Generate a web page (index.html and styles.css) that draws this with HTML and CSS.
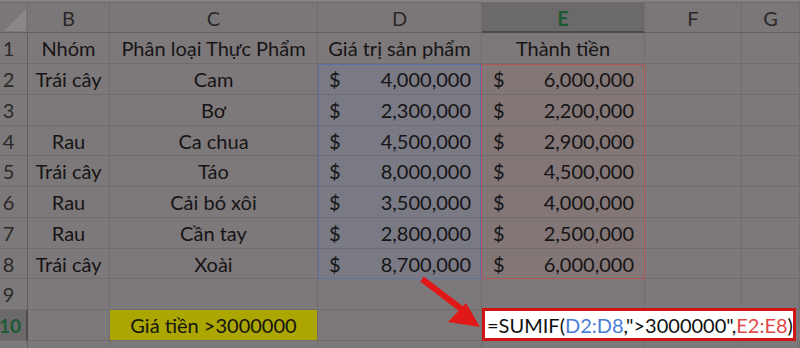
FILE: index.html
```html
<!DOCTYPE html>
<html>
<head>
<meta charset="utf-8">
<link rel="stylesheet" href="styles.css">
</head>
<body>
<div class="sheet">
  <div class="topstrip"></div>
  <div class="grid">
    <div class="hd corner"><span class="tri"></span></div>
    <div class="hd col">B</div>
    <div class="hd col">C</div>
    <div class="hd col">D</div>
    <div class="hd col sel">E</div>
    <div class="hd col">F</div>
    <div class="hd col">G</div>

    <div class="rh">1</div><div class="c ctr">Nhóm</div><div class="c ctr">Phân loại Thực Phẩm</div><div class="c ctr">Giá trị sản phẩm</div><div class="c ctr">Thành tiền</div><div class="c"></div><div class="c"></div>

    <div class="rh">2</div><div class="c ctr">Trái cây</div><div class="c ctr">Cam</div><div class="c money blue first"><span>$</span><span>4,000,000</span></div><div class="c money red first"><span>$</span><span>6,000,000</span></div><div class="c"></div><div class="c"></div>
    <div class="rh">3</div><div class="c ctr"></div><div class="c ctr">Bơ</div><div class="c money blue"><span>$</span><span>2,300,000</span></div><div class="c money red"><span>$</span><span>2,200,000</span></div><div class="c"></div><div class="c"></div>
    <div class="rh">4</div><div class="c ctr">Rau</div><div class="c ctr">Ca chua</div><div class="c money blue"><span>$</span><span>4,500,000</span></div><div class="c money red"><span>$</span><span>2,900,000</span></div><div class="c"></div><div class="c"></div>
    <div class="rh">5</div><div class="c ctr">Trái cây</div><div class="c ctr">Táo</div><div class="c money blue"><span>$</span><span>8,000,000</span></div><div class="c money red"><span>$</span><span>4,500,000</span></div><div class="c"></div><div class="c"></div>
    <div class="rh">6</div><div class="c ctr">Rau</div><div class="c ctr">Cải bó xôi</div><div class="c money blue"><span>$</span><span>3,500,000</span></div><div class="c money red"><span>$</span><span>4,000,000</span></div><div class="c"></div><div class="c"></div>
    <div class="rh">7</div><div class="c ctr">Rau</div><div class="c ctr">Cần tay</div><div class="c money blue"><span>$</span><span>2,800,000</span></div><div class="c money red"><span>$</span><span>2,500,000</span></div><div class="c"></div><div class="c"></div>
    <div class="rh">8</div><div class="c ctr">Trái cây</div><div class="c ctr">Xoài</div><div class="c money blue last"><span>$</span><span>8,700,000</span></div><div class="c money red last"><span>$</span><span>6,000,000</span></div><div class="c"></div><div class="c"></div>
    <div class="rh">9</div><div class="c"></div><div class="c"></div><div class="c"></div><div class="c"></div><div class="c"></div><div class="c"></div>
    <div class="rh selrow">10</div><div class="c"></div><div class="c ctr yellow">Giá tiền &gt;3000000</div><div class="c"></div>
    <div class="formula">=SUMIF(<span class="fb">D2:D8</span>,"&gt;3000000",<span class="fr">E2:E8</span>)</div>
    <div class="rh"></div><div class="c"></div><div class="c"></div><div class="c"></div><div class="c"></div><div class="c"></div><div class="c"></div>
  </div>
  <svg class="arrow" width="80" height="70" viewBox="0 0 80 70">
    <line x1="4" y1="4" x2="46" y2="36" stroke="#e01818" stroke-width="6" stroke-linecap="butt"/>
    <polygon points="62,52 30,47 48,28" fill="#e01818"/>
  </svg>
</div>
</body>
</html>
```
FILE: styles.css
```css
* { box-sizing: border-box; }
html, body { margin: 0; padding: 0; }
body {
  width: 800px;
  height: 348px;
  overflow: hidden;
  background: #7d797a;
  font-family: Lato, "Open Sans", sans-serif;
  color: #161415;
}
.sheet { position: relative; width: 800px; height: 348px; overflow: hidden; }
.topstrip { height: 3px; background: #858182; border-bottom: 1px solid #6e6a6b; }
.grid {
  display: grid;
  grid-template-columns: 28px 82px 208px 164px 163px 97px 58px;
  grid-template-rows: 30px 31px 31px 31px 30px 31px 31px 31px 30px 31px 31px 31px;
  width: 800px;
}
.hd {
  background: #7b7778;
  border-bottom: 1px solid #625e5f;
  border-right: 1px solid #716d6e;
  display: flex;
  align-items: center;
  justify-content: center;
  font-size: 20px;
  color: #2a2829;
  padding-top: 1px;
}
.corner { justify-content: flex-start; }
.tri {
  width: 0; height: 0;
  border-left: 22px solid transparent;
  border-bottom: 22px solid #8b8788;
  margin: 4px 0 0 4px;
}
.sel {
  background: #6c696a;
  border-bottom: 2px solid #4d4a4b;
  color: #1d5a35;
  font-weight: 700;
}
.rh {
  border-bottom: 1px solid #716d6e;
  border-right: 1px solid #625e5f;
  display: flex;
  align-items: center;
  justify-content: center;
  padding-right: 10px;
  font-size: 20px;
  color: #2a2829;
}
.selrow {
  background: #6c696a;
  border-right: 2px solid #4d4a4b;
  color: #1d5a35;
  font-weight: 700;
  padding-right: 6px;
  font-size: 19px;
}
.c {
  border-bottom: 1px solid #716d6e;
  border-right: 1px solid #716d6e;
  font-size: 20px;
  display: flex;
  align-items: center;
  white-space: nowrap;
}
.ctr { justify-content: center; }
.money { justify-content: space-between; padding: 0 10px 0 11px; }
.blue {
  background: #7a7a85;
  border-right-color: #ad5454;
  box-shadow: inset 1px 0 0 #5a72a6, inset -1px 0 0 #5a72a6;
}
.blue.first { box-shadow: inset 1px 0 0 #5a72a6, inset -1px 0 0 #5a72a6, inset 0 1px 0 #5a72a6; }
.blue.last { border-bottom-color: #5a72a6; }
.red {
  background: #827677;
  border-right-color: #ad5454;
}
.red.first { box-shadow: inset 0 1px 0 #ad5454; }
.red.last { border-bottom-color: #ad5454; }
.yellow { background: #aba600; }
.formula {
  grid-column: span 3;
  margin: -2px 4px 0 0;
  background: #ffffff;
  border: 3px solid #d01515;
  font-size: 20px;
  color: #111;
  display: flex;
  align-items: center;
  padding-left: 2px;
  white-space: nowrap;
  position: relative;
  z-index: 2;
}
.fb { color: #4a7dd6; }
.fr { color: #e04848; }
.arrow { position: absolute; left: 418px; top: 275px; }
```
